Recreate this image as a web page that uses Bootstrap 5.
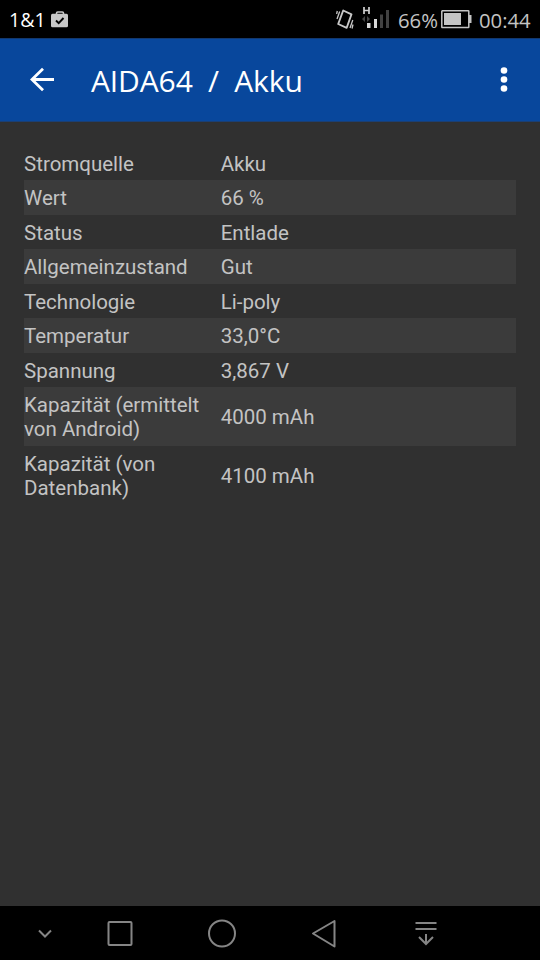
<!DOCTYPE html>
<html lang="de">
<head>
<meta charset="utf-8">
<meta name="viewport" content="width=device-width, initial-scale=1">
<title>AIDA64 / Akku</title>
<link href="https://cdn.jsdelivr.net/npm/bootstrap@5.3.0/dist/css/bootstrap.min.css" rel="stylesheet">
<style>
body{background:#303030;font-family:Roboto,"Noto Sans",sans-serif;height:960px;overflow:hidden}
svg{display:block;flex:none}
.status{height:38px;background:#000;color:#c4c4c4;font:20.3px/36px "Open Sans",sans-serif;padding:2px 8px 0 9px}
.carrier{width:42px;color:#fff;font-size:19.6px}
.pct{width:43px}
.clock{width:53px;margin-left:7px}
.appbar{height:84px;background:#08479c;border-top:1px solid #12386f;border-bottom:1px solid #1b3f73;color:#fff}
.title{font:30px/36px "Open Sans",sans-serif;letter-spacing:-.12px;margin-left:35px;padding-top:1px;font-weight:400;white-space:pre}
.info{padding:23.5px 24px 0}
.info-row{padding:6.25px 0 4.25px;font-size:20.5px;line-height:24px;color:#c3c3c3}
.info-row:nth-child(even){background:#3b3b3b}
.key{width:196.7px;flex:none;white-space:nowrap}
.bottom{height:54px;background:#000}
</style>
</head>
<body class="d-flex flex-column">
<header class="status d-flex align-items-center">
  <span class="carrier text-nowrap">1&amp;1</span>
  <svg width="18" height="18" viewBox="0 0 18 18"><path d="M5.500 4V2.200Q5.500 1 6.700 1h4.600q1.200 0 1.200 1.200V4" fill="none" stroke="#c8c8c8" stroke-width="1.600"/><rect x="0" y="2.800" width="17" height="13.500" rx="1.500" fill="#c8c8c8"/><path d="M5 9.500l2.700 2.700L12.500 7" fill="none" stroke="#000" stroke-width="1.900"/></svg>
  <svg class="ms-auto" width="18" height="22" viewBox="0 0 18 22" fill="none" stroke="#c8c8c8"><path d="M7.200 1.500L15.500 5.300 10.700 18.800 2.200 15z" stroke-width="1.900" stroke-linejoin="round"/><path d="M1.300 2L.6 5M3.700 2.500L1 10M14 19l2.800-8M17 15.500l-1 4" stroke-width="1.300"/></svg>
  <svg class="ms-2" width="28" height="28" viewBox="0 0 28 28"><path d="M2 1v7M7 1v7M2 4.500h5" stroke="#d0d0d0" stroke-width="1.700"/><path d="M0 13l3-3v6zM8 13l-3-3v6z" fill="#444"/><path d="M5 17h3.500v5H5z" fill="#d8d8d8"/><path d="M12 13h3v9h-3z" fill="#d8d8d8"/><path d="M18 8.500h3V22h-3zM24 4h3v18h-3z" fill="#424242"/></svg>
  <span class="pct text-nowrap ms-2">66%</span>
  <svg width="31" height="20" viewBox="0 0 31 20"><rect x=".8" y=".8" width="27" height="16.700" rx=".5" fill="none" stroke="#c4c4c4" stroke-width="1.500"/><path d="M3 3h17v12H3zM28 5h2.500v8H28z" fill="#c4c4c4"/></svg>
  <span class="clock text-nowrap">00:44</span>
</header>
<nav class="appbar d-flex align-items-center ps-4 pe-4">
  <svg class="ms-1" width="28" height="26" viewBox="0 0 28 26" fill="none" stroke="#fff" stroke-width="2.800"><path d="M26 12.500H4M15 1.700L4 12.500l11 10.800"/></svg>
  <h1 class="title mb-0">AIDA64  /  Akku</h1>
  <svg class="ms-auto me-2" width="8" height="26" viewBox="0 0 8 26" fill="#fff"><circle cx="4" cy="3.500" r="3.300"/><circle cx="4" cy="12.500" r="3.300"/><circle cx="4" cy="21.500" r="3.300"/></svg>
</nav>
<main class="info flex-grow-1">
  <div class="info-row d-flex align-items-center"><div class="key">Stromquelle</div><div>Akku</div></div>
  <div class="info-row d-flex align-items-center"><div class="key">Wert</div><div>66 %</div></div>
  <div class="info-row d-flex align-items-center"><div class="key">Status</div><div>Entlade</div></div>
  <div class="info-row d-flex align-items-center"><div class="key">Allgemeinzustand</div><div>Gut</div></div>
  <div class="info-row d-flex align-items-center"><div class="key">Technologie</div><div>Li-poly</div></div>
  <div class="info-row d-flex align-items-center"><div class="key">Temperatur</div><div>33,0°C</div></div>
  <div class="info-row d-flex align-items-center"><div class="key">Spannung</div><div>3,867 V</div></div>
  <div class="info-row d-flex align-items-center"><div class="key">Kapazität (ermittelt<br>von Android)</div><div>4000 mAh</div></div>
  <div class="info-row d-flex align-items-center"><div class="key">Kapazität (von<br>Datenbank)</div><div>4100 mAh</div></div>
</main>
<footer class="bottom">
  <svg width="540" height="54" viewBox="0 0 540 54" fill="none" stroke="#858585" stroke-width="2"><path d="M39 24.500l6 6 6-6"/><rect x="108.500" y="16" width="23" height="23" rx="1"/><circle cx="222" cy="27.500" r="13"/><path d="M334.500 15v25.500L313 27.500z" stroke-linejoin="round"/><path d="M415.500 17h21M415.500 23h21M426 28v10M419 31l7 7 7-7"/></svg>
</footer>
<script src="https://cdn.jsdelivr.net/npm/bootstrap@5.3.0/dist/js/bootstrap.bundle.min.js"></script>
</body>
</html>
